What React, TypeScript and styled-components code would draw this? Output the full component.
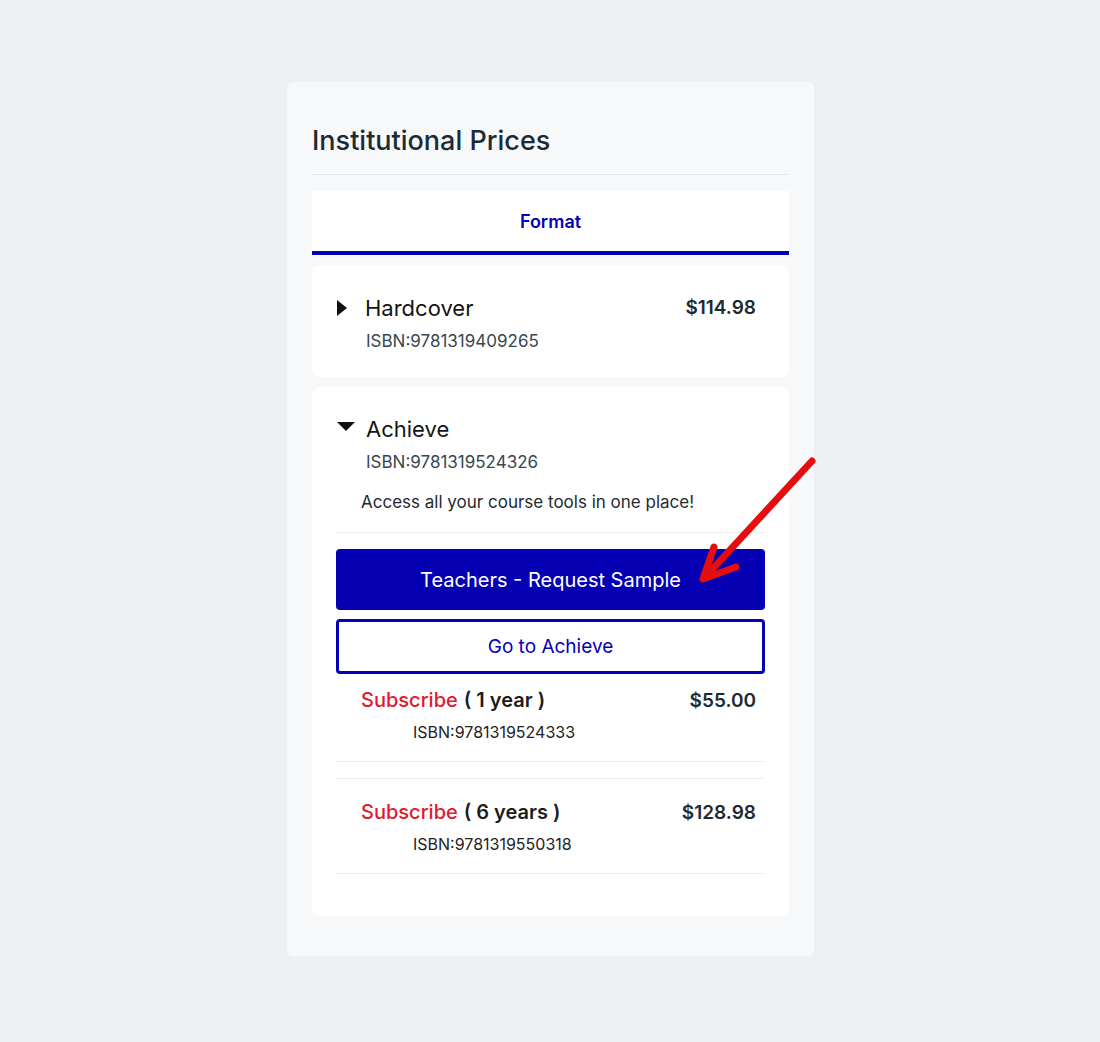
import React from "react";
import styled, { createGlobalStyle } from "styled-components";

const GlobalStyle = createGlobalStyle`
  body {
    margin: 0;
    background: #eeeff1;
    font-family: Inter, "Open Sans", Arial, sans-serif;
  }
`;

const Page = styled.div`
  position: relative;
  min-height: 1042px;
  padding: 82px 0 0 287px;
  box-sizing: border-box;
`;

const Panel = styled.section`
  width: 527px;
  box-sizing: border-box;
  background: #f7f8f9;
  border-radius: 6px;
  padding: 43px 25px 40px;
  display: flex;
  flex-direction: column;
`;

const Title = styled.h2`
  margin: 0;
  font-size: 27px;
  line-height: 32px;
  font-weight: 500;
  color: #1c2b33;
  padding-bottom: 17px;
  border-bottom: 1px solid #e6e8ea;
`;

const Tab = styled.div`
  margin-top: 16px;
  height: 64px;
  box-sizing: border-box;
  background: #fff;
  border-bottom: 4px solid #0600b4;
  display: flex;
  align-items: center;
  justify-content: center;
  font-size: 18px;
  font-weight: 600;
  color: #0600b4;
`;

const Card = styled.div<{ $pt: number; $pb: number }>`
  margin-top: 10px;
  background: #fff;
  border-radius: 8px;
  padding: ${(p) => p.$pt}px 24px ${(p) => p.$pb}px;
`;

const Head = styled.div`
  display: flex;
  align-items: flex-start;
  justify-content: space-between;
  padding-right: 9px;
`;

const Name = styled.div`
  display: flex;
  align-items: center;
  font-size: 22px;
  line-height: 30px;
  color: #141414;
`;

const Caret = styled.span<{ $open?: boolean }>`
  display: inline-block;
  width: 0;
  height: 0;
  margin-left: 1px;
  ${(p) =>
    p.$open
      ? `border-left: 9px solid transparent;
         border-right: 9px solid transparent;
         border-top: 9px solid #111;
         margin-right: 11px;
         margin-top: -6px;`
      : `border-top: 8px solid transparent;
         border-bottom: 8px solid transparent;
         border-left: 10px solid #111;
         margin-right: 18px;`}
`;

const Price = styled.div`
  font-size: 19px;
  line-height: 30px;
  font-weight: 600;
  color: #1c2b33;
`;

const Isbn = styled.div<{ $indent: number }>`
  margin-left: ${(p) => p.$indent}px;
  margin-top: 6px;
  font-size: 17px;
  line-height: 24px;
  color: #38474f;
`;

const Blurb = styled.p`
  margin: 16px 0 0 25px;
  font-size: 17px;
  line-height: 24px;
  color: #1f2a30;
`;

const Rule = styled.hr`
  margin: 18px 0 0;
  border: none;
  border-top: 1px solid #eceef0;
`;

const Primary = styled.button`
  margin-top: 16px;
  width: 100%;
  height: 61px;
  border: none;
  border-radius: 4px;
  background: #0600b4;
  color: #fff;
  font-family: inherit;
  font-size: 20px;
  cursor: pointer;
`;

const Secondary = styled.button`
  margin-top: 9px;
  width: 100%;
  height: 55px;
  border: 3px solid #0600b4;
  border-radius: 4px;
  background: #fff;
  color: #0600b4;
  font-family: inherit;
  font-size: 19px;
  cursor: pointer;
`;

const Plans = styled.div`
  display: flex;
  flex-direction: column;
`;

const Plan = styled.div`
  padding: 12px 9px 17px 25px;
  border-bottom: 1px solid #eceef0;
  & + & {
    margin-top: 16px;
    border-top: 1px solid #eceef0;
    padding-top: 19px;
  }
`;

const PlanHead = styled.div`
  display: flex;
  justify-content: space-between;
  font-size: 20px;
  line-height: 28px;
`;

const Sub = styled.span`
  color: #e3192d;
  font-weight: 500;
`;

const Term = styled.span`
  color: #1c1c1c;
  font-weight: 600;
  margin-left: 6px;
`;

const PlanIsbn = styled.div`
  margin: 4px 0 0 52px;
  font-size: 16px;
  line-height: 24px;
  color: #222;
`;

const Arrow = styled.svg`
  position: absolute;
  left: 690px;
  top: 450px;
  width: 140px;
  height: 140px;
  pointer-events: none;
`;

const plans = [
  { term: "( 1 year )", price: "$55.00", isbn: "9781319524333" },
  { term: "( 6 years )", price: "$128.98", isbn: "9781319550318" },
];

export default function App() {
  return (
    <Page>
      <GlobalStyle />
      <Panel>
        <Title>Institutional Prices</Title>
        <Tab>Format</Tab>
        <Card $pt={28} $pb={24}>
          <Head>
            <Name>
              <Caret />
              Hardcover
            </Name>
            <Price>$114.98</Price>
          </Head>
          <Isbn $indent={30}>ISBN:9781319409265</Isbn>
        </Card>
        <Card $pt={27} $pb={42}>
          <Head>
            <Name>
              <Caret $open />
              Achieve
            </Name>
          </Head>
          <Isbn $indent={30}>ISBN:9781319524326</Isbn>
          <Blurb>Access all your course tools in one place!</Blurb>
          <Rule />
          <Primary>Teachers - Request Sample</Primary>
          <Secondary>Go to Achieve</Secondary>
          <Plans>
            {plans.map((p) => (
              <Plan key={p.isbn}>
                <PlanHead>
                  <span>
                    <Sub>Subscribe</Sub>
                    <Term>{p.term}</Term>
                  </span>
                  <Price>{p.price}</Price>
                </PlanHead>
                <PlanIsbn>ISBN:{p.isbn}</PlanIsbn>
              </Plan>
            ))}
          </Plans>
        </Card>
      </Panel>
      <Arrow viewBox="690 450 140 140">
        <g stroke="#e50d0d" strokeWidth="7" strokeLinecap="round" strokeLinejoin="round" fill="none">
          <line x1="812" y1="461" x2="706" y2="576" />
          <polyline points="714,547 703,579 736,567" />
        </g>
      </Arrow>
    </Page>
  );
}
